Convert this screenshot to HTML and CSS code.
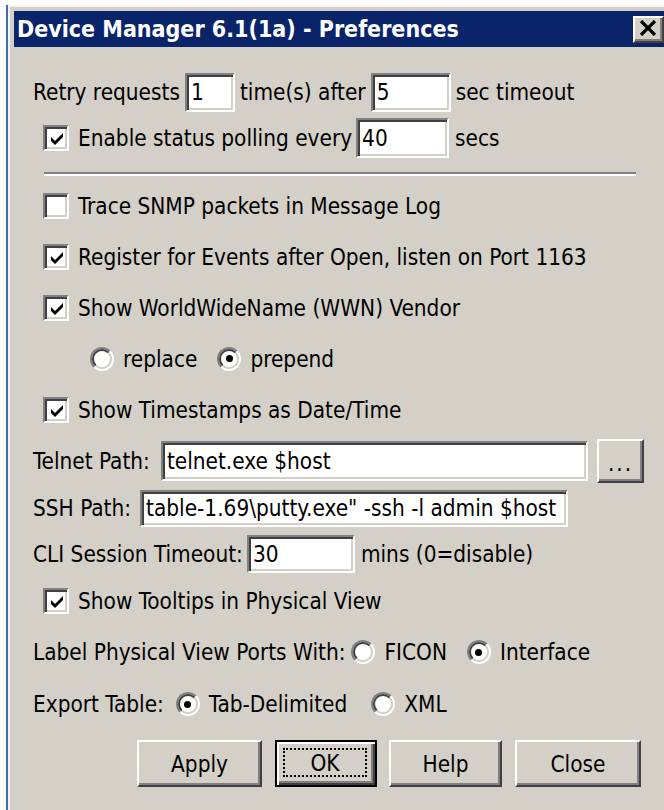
FILE: index.html
```html
<!DOCTYPE html>
<html>
<head>
<meta charset="utf-8">
<title>Device Manager 6.1(1a) - Preferences</title>
<link rel="stylesheet" href="styles.css">
</head>
<body>
<div class="window">
  <div class="titlebar">
    <span class="title">Device Manager 6.1(1a) - Preferences</span>
    <span class="close-btn">
      <svg width="18" height="16" viewBox="0 0 18 16"><path d="M2 1 L16 15 M16 1 L2 15" stroke="#000" stroke-width="3.2" fill="none"/></svg>
    </span>
  </div>

  <div class="content">
    <div class="row row-retry">
      <span>Retry requests</span>
      <span class="field f-retry">1</span>
      <span>time(s) after</span>
      <span class="field f-timeout">5</span>
      <span>sec timeout</span>
    </div>

    <div class="row row-poll indent">
      <span class="check on"><svg width="18" height="18" viewBox="0 0 18 18"><path d="M3 7 L7 11 L15 3 L15 7 L7 15 L3 11 Z" fill="#000"/></svg></span>
      <span class="label">Enable status polling every</span>
      <span class="field f-poll">40</span>
      <span>secs</span>
    </div>

    <div class="separator"></div>

    <div class="row opt indent">
      <span class="check"></span>
      <span class="label">Trace SNMP packets in Message Log</span>
    </div>
    <div class="row opt indent">
      <span class="check on"><svg width="18" height="18" viewBox="0 0 18 18"><path d="M3 7 L7 11 L15 3 L15 7 L7 15 L3 11 Z" fill="#000"/></svg></span>
      <span class="label">Register for Events after Open, listen on Port 1163</span>
    </div>
    <div class="row opt indent">
      <span class="check on"><svg width="18" height="18" viewBox="0 0 18 18"><path d="M3 7 L7 11 L15 3 L15 7 L7 15 L3 11 Z" fill="#000"/></svg></span>
      <span class="label">Show WorldWideName (WWN) Vendor</span>
    </div>
    <div class="row opt indent-radio">
      <span class="radio"><span class="radio-in"></span></span>
      <span class="rlabel">replace</span>
      <span class="radio"><span class="radio-in sel"></span></span>
      <span class="rlabel">prepend</span>
    </div>
    <div class="row opt indent">
      <span class="check on"><svg width="18" height="18" viewBox="0 0 18 18"><path d="M3 7 L7 11 L15 3 L15 7 L7 15 L3 11 Z" fill="#000"/></svg></span>
      <span class="label">Show Timestamps as Date/Time</span>
    </div>

    <div class="row row-telnet">
      <span>Telnet Path:</span>
      <span class="field f-telnet">telnet.exe $host</span>
      <span class="btn browse">...</span>
    </div>
    <div class="row row-ssh">
      <span>SSH Path:</span>
      <span class="field f-ssh">table-1.69\putty.exe" -ssh -l admin $host</span>
    </div>
    <div class="row row-cli">
      <span>CLI Session Timeout:</span>
      <span class="field f-cli">30</span>
      <span>mins (0=disable)</span>
    </div>

    <div class="row line indent tooltips">
      <span class="check on"><svg width="18" height="18" viewBox="0 0 18 18"><path d="M3 7 L7 11 L15 3 L15 7 L7 15 L3 11 Z" fill="#000"/></svg></span>
      <span class="label">Show Tooltips in Physical View</span>
    </div>
    <div class="row line ports">
      <span class="plabel">Label Physical View Ports With:</span>
      <span class="radio"><span class="radio-in"></span></span>
      <span class="rlabel">FICON</span>
      <span class="radio"><span class="radio-in sel"></span></span>
      <span class="rlabel">Interface</span>
    </div>
    <div class="row line export">
      <span class="plabel">Export Table:</span>
      <span class="radio"><span class="radio-in sel"></span></span>
      <span class="rlabel">Tab-Delimited</span>
      <span class="radio"><span class="radio-in"></span></span>
      <span class="rlabel">XML</span>
    </div>

    <div class="buttons">
      <span class="btn b-apply">Apply</span>
      <span class="btn default b-ok"><span class="focus">OK</span></span>
      <span class="btn b-help">Help</span>
      <span class="btn b-close">Close</span>
    </div>
  </div>
</div>
</body>
</html>
```

FILE: styles.css
```css
html, body {
  margin: 0;
  padding: 0;
  width: 664px;
  height: 810px;
  overflow: hidden;
  background: #ffffff;
}

body {
  font-family: "DejaVu Sans Condensed", "DejaVu Sans", "Liberation Sans", sans-serif;
  font-stretch: condensed;
  font-size: 22.4px;
  color: #000;
}

/* dialog frame */
.window {
  margin: 5px 0 0 6px;
  width: 680px;
  height: 830px;
  box-sizing: border-box;
  padding: 6px 0 0 6px;
  background: #d4d0c8;
  border-left: 2px solid #3a6ea5;
  box-shadow: inset 2px 2px 0 #f4f3ef;
}

.titlebar {
  width: 651px;
  height: 36px;
  box-sizing: border-box;
  padding: 0 1px 0 3px;
  background: #0a246a;
  display: flex;
  align-items: center;
  justify-content: space-between;
}

.title {
  color: #fff;
  font-weight: bold;
  font-size: 23px;
  white-space: nowrap;
}

.close-btn {
  width: 31px;
  height: 27px;
  box-sizing: border-box;
  background: #d4d0c8;
  border: 2px solid;
  border-color: #fff #404040 #404040 #fff;
  box-shadow: inset -2px -2px 0 #808080;
  display: flex;
  align-items: center;
  justify-content: center;
  padding: 0 2px 2px 0;
}

/* body of the dialog */
.content {
  width: 650px;
  padding: 25px 0 0 19px;
  box-sizing: border-box;
  display: flex;
  flex-direction: column;
}

.row {
  display: flex;
  align-items: center;
  white-space: nowrap;
}

.row-retry { height: 40px; gap: 5px; }
.row-poll { height: 40px; margin-top: 6px; }

.indent { padding-left: 10px; }
.indent-radio { padding-left: 57px; }

.opt { height: 51px; }

.separator {
  margin: 14px 0 4px 11px;
  width: 592px;
  height: 0;
  border-top: 2px solid #808080;
  border-bottom: 2px solid #fff;
}

.label { margin-left: 9px; }

/* sunken text fields */
.field {
  box-sizing: border-box;
  height: 39px;
  background: #fff;
  border: 2px solid;
  border-color: #808080 #fff #fff #808080;
  box-shadow: inset 2px 2px 0 #404040, inset -2px -2px 0 #d4d0c8;
  padding: 0 4px;
  display: flex;
  align-items: center;
  overflow: hidden;
}

.f-retry { width: 50px; }
.f-timeout { width: 80px; }
.f-poll { width: 93px; height: 40px; margin: 0 6px 0 4px; }

.row-telnet { height: 44px; margin-top: 4px; width: 611px; }
.f-telnet { flex: 1; height: 40px; margin-left: 11px; }
.browse {
  width: 47px;
  height: 44px;
  margin-left: 9px;
  letter-spacing: 2px;
  padding-top: 4px;
}

.row-ssh { height: 38px; margin-top: 6px; width: 535px; }
.f-ssh { flex: 1; height: 37px; margin-left: 9px; }

.row-cli { height: 38px; margin-top: 8px; }
.f-cli { width: 108px; height: 38px; margin: 0 6px 0 4px; }

.line { height: 44px; }
.tooltips { margin-top: 6px; }
.ports { margin-top: 7px; }
.export { margin-top: 8px; }
.export .plabel { margin-right: 12px; }
.export .rlabel { margin-right: 24px; }

/* checkbox: sunken square */
.check {
  width: 26px;
  height: 26px;
  box-sizing: border-box;
  flex: none;
  background: #fff;
  border: 2px solid;
  border-color: #808080 #fff #fff #808080;
  box-shadow: inset 2px 2px 0 #404040, inset -2px -2px 0 #d4d0c8;
  display: flex;
  align-items: center;
  justify-content: center;
  padding: 2px 0 0 2px;
}

/* radio button: sunken circle */
.radio {
  width: 24px;
  height: 24px;
  box-sizing: border-box;
  flex: none;
  border-radius: 50%;
  border: 2px solid;
  border-color: #808080 #fff #fff #808080;
}
.radio-in {
  display: block;
  width: 100%;
  height: 100%;
  box-sizing: border-box;
  border-radius: 50%;
  border: 2px solid;
  border-color: #404040 #d4d0c8 #d4d0c8 #404040;
  background: #fff;
  position: relative;
}
.radio-in.sel::after {
  content: "";
  position: absolute;
  left: 50%;
  top: 50%;
  width: 7px;
  height: 7px;
  margin: -3.5px 0 0 -3.5px;
  border-radius: 50%;
  background: #000;
}

.rlabel { margin-left: 9px; margin-right: 20px; }
.plabel { margin-right: 6px; }

/* push buttons */
.btn {
  box-sizing: border-box;
  background: #d4d0c8;
  border: 2px solid;
  border-color: #fff #404040 #404040 #fff;
  box-shadow: inset -2px -2px 0 #808080;
  display: flex;
  align-items: center;
  justify-content: center;
}

.buttons {
  display: flex;
  margin-top: 14px;
  padding-left: 104px;
  height: 47px;
}
.buttons .btn { height: 47px; }
.b-apply { width: 125px; }
.b-ok { width: 102px; margin-left: 13px; }
.b-help { width: 113px; margin-left: 12px; }
.b-close { width: 126px; margin-left: 13px; }

.btn.default {
  border: 2px solid #000;
  box-shadow: inset 2px 2px 0 #fff, inset -2px -2px 0 #404040, inset -4px -4px 0 #808080;
  padding: 4px;
}
.focus {
  flex: 1;
  align-self: stretch;
  display: flex;
  align-items: center;
  justify-content: center;
  border: 2px dotted #000;
  margin: 2px 4px 4px 2px;
}
```
